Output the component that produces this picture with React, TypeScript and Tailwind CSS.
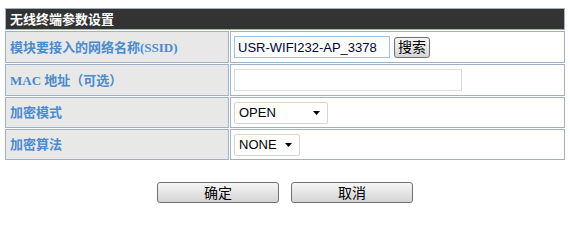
import { useState } from 'react'

const labelFont = "font-['Liberation_Serif','Noto_Sans_CJK_SC',serif]"
const valueFont = "font-['Liberation_Sans','Noto_Sans_CJK_SC',sans-serif]"

function Select({ value, options, width }: { value: string; options: string[]; width: string }) {
  const [v, setV] = useState(value)
  return (
    <div className={`relative flex h-[22px] ${width}`}>
      <select
        value={v}
        onChange={(e) => setV(e.target.value)}
        className={`block h-[22px] w-full appearance-none rounded-[2px] border border-[#d4d4d4] bg-white py-0 pl-[4px] text-[13px] leading-[20px] text-black outline-none ${valueFont}`}
      >
        {options.map((o) => (
          <option key={o}>{o}</option>
        ))}
      </select>
      <svg
        className="pointer-events-none absolute right-[8px] top-[9px]"
        width="7"
        height="4"
        viewBox="0 0 7 4"
      >
        <path d="M0 0h7L3.5 4z" fill="#000" />
      </svg>
    </div>
  )
}

function Row({ label, tall, children }: { label: string; tall?: boolean; children: React.ReactNode }) {
  const h = tall ? 'h-[32px]' : 'h-[31px]'
  return (
    <tr>
      <td className={`${h} w-[224px] border border-[#9fb0c8] bg-[#e8e8e8] py-0 pl-[4px] text-[13px] leading-none font-bold text-[#4a8bcb] ${labelFont}`}>
        {label}
      </td>
      <td className={`${h} border border-[#9fb0c8] bg-white py-0 pl-[3px] leading-none`}>{children}</td>
    </tr>
  )
}

export default function App() {
  const [ssid, setSsid] = useState('USR-WIFI232-AP_3378')
  const [mac, setMac] = useState('')

  return (
    <div className="h-[206px] w-[570px] bg-white pt-[7px]">
      <table className="ml-[4px] w-[562px] border-separate border-spacing-[1px]">
        <tbody>
          <tr>
            <td
              colSpan={2}
              className={`h-[22px] border border-[#9fb0c8] bg-[#333333] py-0 pl-[4px] text-[13px] leading-none font-bold text-white ${labelFont}`}
            >
              无线终端参数设置
            </td>
          </tr>
          <Row label="模块要接入的网络名称(SSID)" tall>
            <div className="flex items-center gap-[4px]">
              <input
                value={ssid}
                onChange={(e) => setSsid(e.target.value)}
                className={`h-[22px] w-[156px] border border-[#9cc2e6] px-[3px] text-[13px] text-[#000033] outline-none ${valueFont}`}
              />
              <button
                className={`h-[21px] w-[36px] rounded-[3px] border border-[#707070] bg-gradient-to-b from-[#f6f6f6] to-[#d6d6d6] text-[14px] leading-none text-black ${valueFont}`}
              >
                搜索
              </button>
            </div>
          </Row>
          <Row label="MAC 地址（可选）" tall>
            <input
              value={mac}
              onChange={(e) => setMac(e.target.value)}
              className={`block h-[22px] w-[228px] border border-[#dcdcdc] px-[3px] text-[13px] outline-none ${valueFont}`}
            />
          </Row>
          <Row label="加密模式">
            <Select value="OPEN" options={['OPEN', 'WEP', 'WPA-PSK', 'WPA2-PSK']} width="w-[94px]" />
          </Row>
          <Row label="加密算法">
            <Select value="NONE" options={['NONE', 'TKIP', 'AES']} width="w-[66px]" />
          </Row>
        </tbody>
      </table>
      <div className="mt-[21px] flex justify-center gap-[12px]">
        <button
          className={`h-[21px] w-[122px] rounded-[3px] border border-[#707070] bg-gradient-to-b from-[#f6f6f6] to-[#d4d4d4] text-[14px] leading-none text-black ${valueFont}`}
        >
          确定
        </button>
        <button
          className={`h-[21px] w-[122px] rounded-[3px] border border-[#707070] bg-gradient-to-b from-[#f6f6f6] to-[#d4d4d4] text-[14px] leading-none text-black ${valueFont}`}
        >
          取消
        </button>
      </div>
    </div>
  )
}
